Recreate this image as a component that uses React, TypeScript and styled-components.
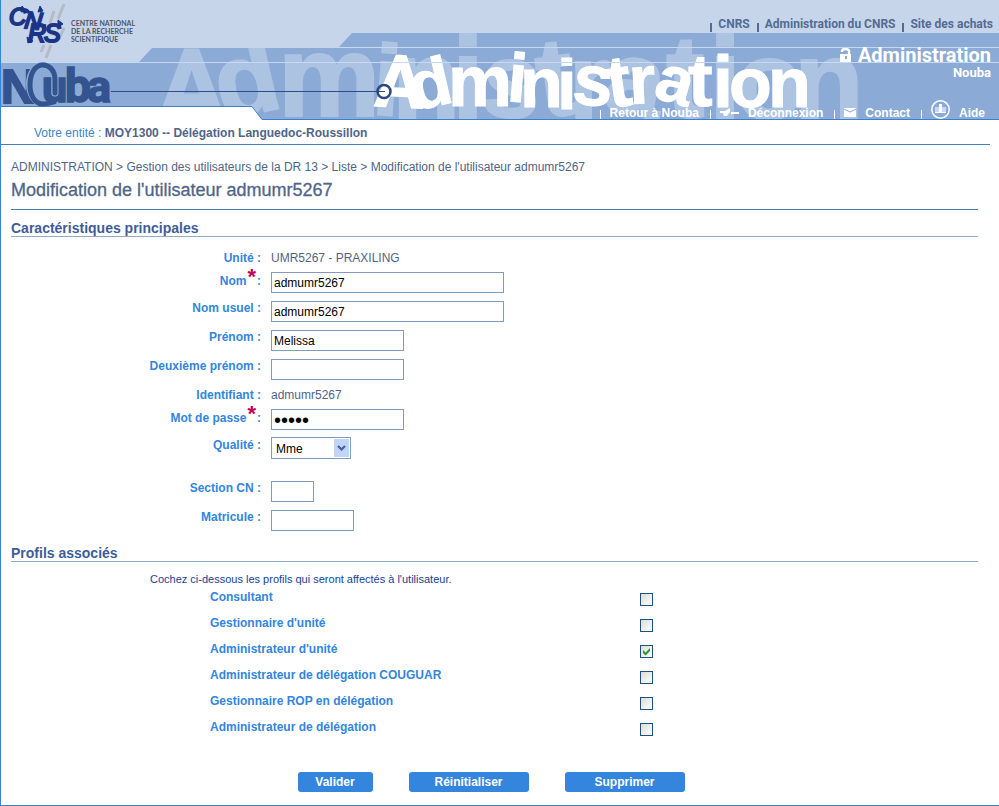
import React from 'react';
import styled, { createGlobalStyle } from 'styled-components';

const sans = '"Liberation Sans", Arial, sans-serif';
const din = 'Roboto, "Open Sans", sans-serif';
const blue = '#3385de';
const slate = '#4f6588';

const Global = createGlobalStyle`
  * { box-sizing: border-box; }
  body { margin: 0; background: #fff; font-family: ${sans}; font-size: 12px; color: ${slate}; }
`;

const Page = styled.div`
  border-left: 1px solid ${blue};
  border-bottom: 1px solid #4180bf;
`;

const Banner = styled.header`
  position: relative;
  height: 120px;
  overflow: hidden;
  display: flex;
  flex-direction: column;
  align-items: flex-end;
`;

const Artwork = styled.svg`
  position: absolute;
  inset: 0;
  width: 100%;
  height: 100%;
`;

const SiteLinks = styled.nav`
  position: relative;
  display: flex;
  gap: 7px;
  padding: 16px 6px 0 0;
  font: 700 12px/16px ${din};
`;

const SiteLink = styled.a`
  display: flex;
  align-items: flex-end;
  gap: 6px;
  color: #526c94;
  text-decoration: none;
  &::before {
    content: '';
    width: 2px;
    height: 9px;
    background: #526c94;
  }
`;

const AppTitle = styled.div`
  position: relative;
  display: flex;
  align-items: center;
  gap: 6px;
  margin-top: 12px;
  padding-right: 8px;
  color: #fff;
  font: 700 20px/22px ${din};
`;

const AppSubtitle = styled.div`
  position: relative;
  padding-right: 8px;
  color: #fff;
  font: 700 13px/14px ${din};
`;

const Menu = styled.nav`
  position: relative;
  display: flex;
  align-items: flex-end;
  margin-top: auto;
  padding: 0 14px 1px 0;
`;

const MenuLink = styled.a`
  display: flex;
  align-items: flex-end;
  gap: 9px;
  margin-left: 11px;
  color: #fff;
  font: 700 12px/11px ${sans};
  text-decoration: none;
  &::before {
    content: '';
    width: 1px;
    height: 9px;
    background: #fff;
  }
`;

const Entity = styled.div`
  margin-right: 9px;
  padding: 5px 0 2px 33px;
  border-bottom: 1px solid #4180bf;
  line-height: 17px;
`;

const EntityLabel = styled.span`
  color: #3c86cc;
`;

const Content = styled.main`
  padding: 13px 21px 13px 10px;
`;

const Crumbs = styled.nav`
  line-height: 18px;
`;

const Crumb = styled.a`
  color: inherit;
  text-decoration: none;
`;

const Title = styled.h1`
  margin: 0;
  padding: 3px 0 8px;
  border-bottom: 1px solid #4180a5;
  font-size: 18px;
  font-weight: 400;
  line-height: 22px;
  -webkit-text-stroke: 0.3px ${slate};
`;

const SectionTitle = styled.h2`
  margin: 0;
  padding-top: 10px;
  border-bottom: 1px solid #93abc3;
  color: #3f5c9a;
  font-size: 14px;
  line-height: 16px;
`;

const Fields = styled.div`
  padding-top: 10px;
`;

const Field = styled.div<{ $h?: number }>`
  display: grid;
  grid-template-columns: 250px minmax(0, 1fr);
  column-gap: 10px;
  height: ${(p) => p.$h ?? 29}px;
`;

const FieldLabel = styled.label<{ $required?: boolean }>`
  padding-top: ${(p) => (p.$required ? 5 : 3)}px;
  text-align: right;
  color: ${blue};
  font-weight: 700;
  line-height: 16px;
`;

const Star = styled.sup`
  margin: 0 1px;
  color: #c0005a;
  font: 700 22px/0 ${sans};
  vertical-align: 1px;
`;

const FieldValue = styled.output`
  padding-top: 3px;
  line-height: 16px;
`;

const TextBox = styled.input<{ $w: number }>`
  width: ${(p) => p.$w}px;
  max-width: 100%;
  height: 21px;
  margin-top: 4px;
  padding: 1px 2px 0;
  border: 1px solid #7f9db9;
  border-radius: 0;
  background: #fff;
  color: #000;
  font: 12px ${sans};
  &[type='password'] {
    font-size: 20px;
  }
`;

const SelectWrap = styled.div`
  position: relative;
  width: 80px;
  height: 22px;
  margin-top: 3px;
`;

const Select = styled.select`
  appearance: none;
  width: 100%;
  height: 100%;
  padding: 1px 20px 0 4px;
  border: 1px solid #7f9db9;
  border-radius: 0;
  background: #fff;
  color: #000;
  font: 12px ${sans};
`;

const SelectArrow = styled.svg`
  position: absolute;
  top: 2px;
  right: 2px;
  width: 15px;
  height: 18px;
  pointer-events: none;
`;

const Hint = styled.p`
  margin: 0;
  padding: 10px 0 0 139px;
  color: #143f97;
  font-size: 11px;
  line-height: 14px;
`;

const ProfileRow = styled.div`
  display: grid;
  grid-template-columns: 430px 13px;
  height: 26px;
  padding-left: 199px;
`;

const ProfileLabel = styled.label`
  padding-top: 3px;
  color: ${blue};
  font-weight: 700;
  line-height: 16px;
`;

const CheckBox = styled.input`
  appearance: none;
  width: 13px;
  height: 13px;
  margin: 7px 0 0;
  border: 1px solid #1c5180;
  background: linear-gradient(135deg, #dcdcd7, #fff);
  &:checked {
    background:
      url("data:image/svg+xml,%3Csvg xmlns='http://www.w3.org/2000/svg' viewBox='0 0 11 11'%3E%3Cpath d='M2 4v3l2.500 2.500L9 5V2L4.500 6.500z' fill='%2321a121'/%3E%3C/svg%3E"),
      linear-gradient(135deg, #dcdcd7, #fff);
  }
`;

const Actions = styled.div`
  display: flex;
  justify-content: center;
  gap: 36px;
  margin-top: 30px;
  padding-right: 7px;
`;

const Action = styled.button<{ $w: number }>`
  width: ${(p) => p.$w}px;
  height: 20px;
  padding: 0;
  border: 0;
  border-radius: 3px;
  background: ${blue};
  color: #fff;
  font: 700 12px/20px ${sans};
`;

type Glyph = [ch: string, x: number, y: number, size: number, rotate?: number];

const ghostGlyphs: Glyph[] = [
  ['A', 157, 121, 100],
  ['d', 222, 121, 104, -13],
  ['m', 277, 116, 115],
  ['i', 370, 114, 100, 4],
  ['n', 391, 118, 112],
  ['i', 451, 118, 115],
  ['s', 478, 114, 106, 6],
  ['t', 541, 118, 112, -8],
  ['r', 568, 118, 106],
  ['a', 600, 108, 104, 12],
  ['t', 665, 117, 116],
  ['i', 708, 119, 116],
  ['o', 734, 119, 112],
  ['n', 793, 120, 114],
];

const titleGlyphs: Glyph[] = [
  ['A', 373, 106, 73, 3],
  ['d', 414, 111, 68, -13],
  ['m', 447, 106, 72],
  ['i', 505, 101, 69, 5],
  ['n', 519, 107, 70],
  ['i', 556, 109, 71],
  ['s', 570, 103, 72, 6],
  ['t', 609, 108, 73, -8],
  ['r', 629, 104, 68, -3],
  ['a', 651, 97, 66, 16],
  ['t', 687, 106, 74],
  ['i', 712, 107, 72],
  ['o', 728, 107, 70],
  ['n', 767, 107, 70],
];

const Lettering = ({ glyphs, fill, stroke }: { glyphs: Glyph[]; fill: string; stroke: number }) => (
  <g fill={fill} stroke={fill} strokeWidth={stroke} fontWeight="700">
    {glyphs.map(([ch, x, y, size, r], i) => (
      <text
        key={i}
        x={x}
        y={y}
        fontSize={size}
        fontFamily={ch === 'A' ? din : sans}
        transform={r ? `rotate(${r} ${x} ${y})` : undefined}
      >
        {ch}
      </text>
    ))}
  </g>
);

const BannerArt = () => (
  <Artwork aria-hidden="true">
    <defs>
      <clipPath id="band">
        <path d="M0 63H137L151 48H337L351 33H4000V120H0Z" />
      </clipPath>
    </defs>
    <rect width="100%" height="120" fill="#c7d5eb" />
    <path d="M0 63H137L151 48H337L351 33H4000V120H0Z" fill="#8baad5" />
    <g clipPath="url(#band)">
      <Lettering glyphs={ghostGlyphs} fill="#adc3e2" stroke={2} />
    </g>
    <Lettering glyphs={titleGlyphs} fill="#fff" stroke={1} />
    <path d="M337 47.500H4000M0 62.500H4000" stroke="#c7d9f2" fill="none" />
    <path d="M110 91.500H384" stroke="#2c4d8a" />
    <circle cx="383" cy="91.500" r="6.500" fill="none" stroke="#2c4780" strokeWidth="2.500" />
    <path d="M-2 106.500H251L261 119.500H4000V130H-2Z" fill="#fff" stroke="#3a80cb" />

    <path
      d="M63 4L57 19M53 11L49 23M63 28L58 39M50 45L45 58M43 45L40 52"
      stroke="#b6bac3"
      strokeWidth="3"
      fill="none"
    />
    <g fill="#1b3486" stroke="#1b3486" strokeWidth="2" fontFamily={sans} fontWeight="400" fontStyle="italic">
      <text x="8" y="25" fontSize="24">C</text>
      <text x="23" y="28" fontSize="24" transform="rotate(6 23 28)">N</text>
      <text x="27" y="42" fontSize="25">R</text>
      <text x="43" y="42" fontSize="25">S</text>
      <path d="M39 6l3 5-5 1zM57 20l5 4-5 3zM26 37l1 6 5-2zM21 6l4 5-5 1z" strokeWidth="1" />
      <path d="M23 10q3-1 5 3M33 24q6 0 12 2" fill="none" strokeWidth="3" />
    </g>
    <g fill="#4c5566" fontFamily="Lato, sans-serif" fontWeight="700" fontSize="7">
      <text x="70" y="26">CENTRE NATIONAL</text>
      <text x="70" y="34">DE LA RECHERCHE</text>
      <text x="70" y="42">SCIENTIFIQUE</text>
    </g>
    <g fill="#34548f" stroke="#34548f" fontWeight="700">
      <text x="0" y="103" fontSize="49" fontFamily={sans} strokeWidth="2">
        N
      </text>
      <ellipse cx="41" cy="84" rx="12" ry="18" fill="#8baad5" stroke="#8baad5" strokeWidth="8" />
      <g fontFamily={din} strokeWidth="1.500">
        <text x="41" y="102" fontSize="45">
          u
        </text>
        <text x="64" y="102" fontSize="46">
          b
        </text>
        <text x="86" y="102" fontSize="45">
          a
        </text>
      </g>
    </g>
    <g fill="none" strokeLinecap="round">
      <path d="M54 76V93" stroke="#8baad5" strokeWidth="7" />
      <path
        d="M54 93V80C54 70 48 65 42 65C33 65 29 75 29 85C29 97 35 104 42 104C47 104 50 103 53 102"
        stroke="#34548f"
        strokeWidth="5"
      />
    </g>
  </Artwork>
);

const LockIcon = () => (
  <svg width="12" height="14" viewBox="0 0 12 14" aria-hidden="true">
    <path d="M2 4V3q0-2 3.500-2T9 3v5" fill="none" stroke="#fff" strokeWidth="2.400" />
    <path d="M0 6h11v8H0z" fill="#fff" />
    <path d="M5 8h2v3H5z" fill="#8baad5" />
  </svg>
);

const PlugIcon = () => (
  <svg width="19" height="12" viewBox="0 0 19 12" aria-hidden="true">
    <path d="M0 4h5l5-3v4l-3 4H4L3 6H0zM12 5h7v2h-7l-1 1V5z" fill="#fff" />
  </svg>
);

const MailIcon = () => (
  <svg width="12" height="12" viewBox="0 0 12 12" aria-hidden="true">
    <path d="M0 1h12v9H0z" fill="#fff" />
    <path d="M0 2l6 3 6-3" fill="none" stroke="#8baad5" />
  </svg>
);

const HelpIcon = () => (
  <svg width="19" height="19" viewBox="0 0 19 19" aria-hidden="true">
    <circle cx="9.500" cy="9.500" r="8.700" fill="none" stroke="#fff" strokeWidth="1.500" />
    <path d="M4 7h4v5H4zM11 7h4v5h-4z" fill="#c7d9f2" />
    <path d="M8 4h3v9H8zM4 12h11v1H4z" fill="#fff" />
  </svg>
);

type FieldDef = {
  id: string;
  label: string;
  value?: string;
  width?: number;
  height?: number;
  required?: boolean;
  type?: string;
};

const fields: FieldDef[] = [
  { id: 'unite', label: 'Unité', value: 'UMR5267 - PRAXILING', height: 21 },
  { id: 'nom', label: 'Nom', value: 'admumr5267', width: 233, required: true },
  { id: 'usuel', label: 'Nom usuel', value: 'admumr5267', width: 233 },
  { id: 'prenom', label: 'Prénom', value: 'Melissa', width: 133 },
  { id: 'prenom2', label: 'Deuxième prénom', value: '', width: 133 },
  { id: 'identifiant', label: 'Identifiant', value: 'admumr5267', height: 21 },
  { id: 'passe', label: 'Mot de passe', value: 'admin', width: 133, required: true, type: 'password' },
  { id: 'qualite', label: 'Qualité', height: 43, type: 'select' },
  { id: 'section', label: 'Section CN', value: '', width: 43 },
  { id: 'matricule', label: 'Matricule', value: '', width: 83 },
];

const profiles = [
  'Consultant',
  "Gestionnaire d'unité",
  "Administrateur d'unité",
  'Administrateur de délégation COUGUAR',
  'Gestionnaire ROP en délégation',
  'Administrateur de délégation',
];

const Control = ({ f }: { f: FieldDef }) => {
  if (f.type === 'select') {
    return (
      <SelectWrap>
        <Select id={f.id} defaultValue="Mme">
          <option>Mme</option>
          <option>Mlle</option>
          <option>M.</option>
        </Select>
        <SelectArrow viewBox="0 0 15 18" aria-hidden="true">
          <rect width="15" height="18" rx="1" fill="#c2d3fc" />
          <path d="M4 7l3.500 3.500L11 7" fill="none" stroke="#4d6185" strokeWidth="2.200" />
        </SelectArrow>
      </SelectWrap>
    );
  }
  if (f.width) {
    return <TextBox id={f.id} type={f.type ?? 'text'} $w={f.width} defaultValue={f.value} />;
  }
  return <FieldValue id={f.id}>{f.value}</FieldValue>;
};

export default function App() {
  return (
    <Page>
      <Global />
      <Banner>
        <BannerArt />
        <SiteLinks>
          <SiteLink href="#cnrs">CNRS</SiteLink>
          <SiteLink href="#administration">Administration du CNRS</SiteLink>
          <SiteLink href="#achats">Site des achats</SiteLink>
        </SiteLinks>
        <AppTitle>
          <LockIcon />
          Administration
        </AppTitle>
        <AppSubtitle>Nouba</AppSubtitle>
        <Menu>
          <MenuLink href="#retour">Retour à Nouba</MenuLink>
          <MenuLink href="#deconnexion">
            <PlugIcon />
            Déconnexion
          </MenuLink>
          <MenuLink href="#contact">
            <MailIcon />
            Contact
          </MenuLink>
          <MenuLink href="#aide">
            <HelpIcon />
            Aide
          </MenuLink>
        </Menu>
      </Banner>
      <Entity>
        <EntityLabel>Votre entité :</EntityLabel> <strong>MOY1300 -- Délégation Languedoc-Roussillon</strong>
      </Entity>
      <Content>
        <Crumbs>
          <Crumb href="#admin">ADMINISTRATION</Crumb> &gt;{' '}
          <Crumb href="#gestion">Gestion des utilisateurs de la DR 13</Crumb> &gt; <Crumb href="#liste">Liste</Crumb>{' '}
          &gt; Modification de l'utilisateur admumr5267
        </Crumbs>
        <Title>Modification de l'utilisateur admumr5267</Title>
        <form onSubmit={(e) => e.preventDefault()}>
          <SectionTitle>Caractéristiques principales</SectionTitle>
          <Fields>
            {fields.map((f) => (
              <Field key={f.id} $h={f.height}>
                <FieldLabel htmlFor={f.id} $required={f.required}>
                  {f.label}
                  {f.required ? <Star>*</Star> : ' '}:
                </FieldLabel>
                <Control f={f} />
              </Field>
            ))}
          </Fields>
          <SectionTitle>Profils associés</SectionTitle>
          <Hint>Cochez ci-dessous les profils qui seront affectés à l'utilisateur.</Hint>
          {profiles.map((name, i) => (
            <ProfileRow key={name}>
              <ProfileLabel htmlFor={`profil-${i}`}>{name}</ProfileLabel>
              <CheckBox id={`profil-${i}`} type="checkbox" defaultChecked={i === 2} />
            </ProfileRow>
          ))}
          <Actions>
            <Action type="submit" $w={75}>
              Valider
            </Action>
            <Action type="reset" $w={120}>
              Réinitialiser
            </Action>
            <Action type="button" $w={120}>
              Supprimer
            </Action>
          </Actions>
        </form>
      </Content>
    </Page>
  );
}
